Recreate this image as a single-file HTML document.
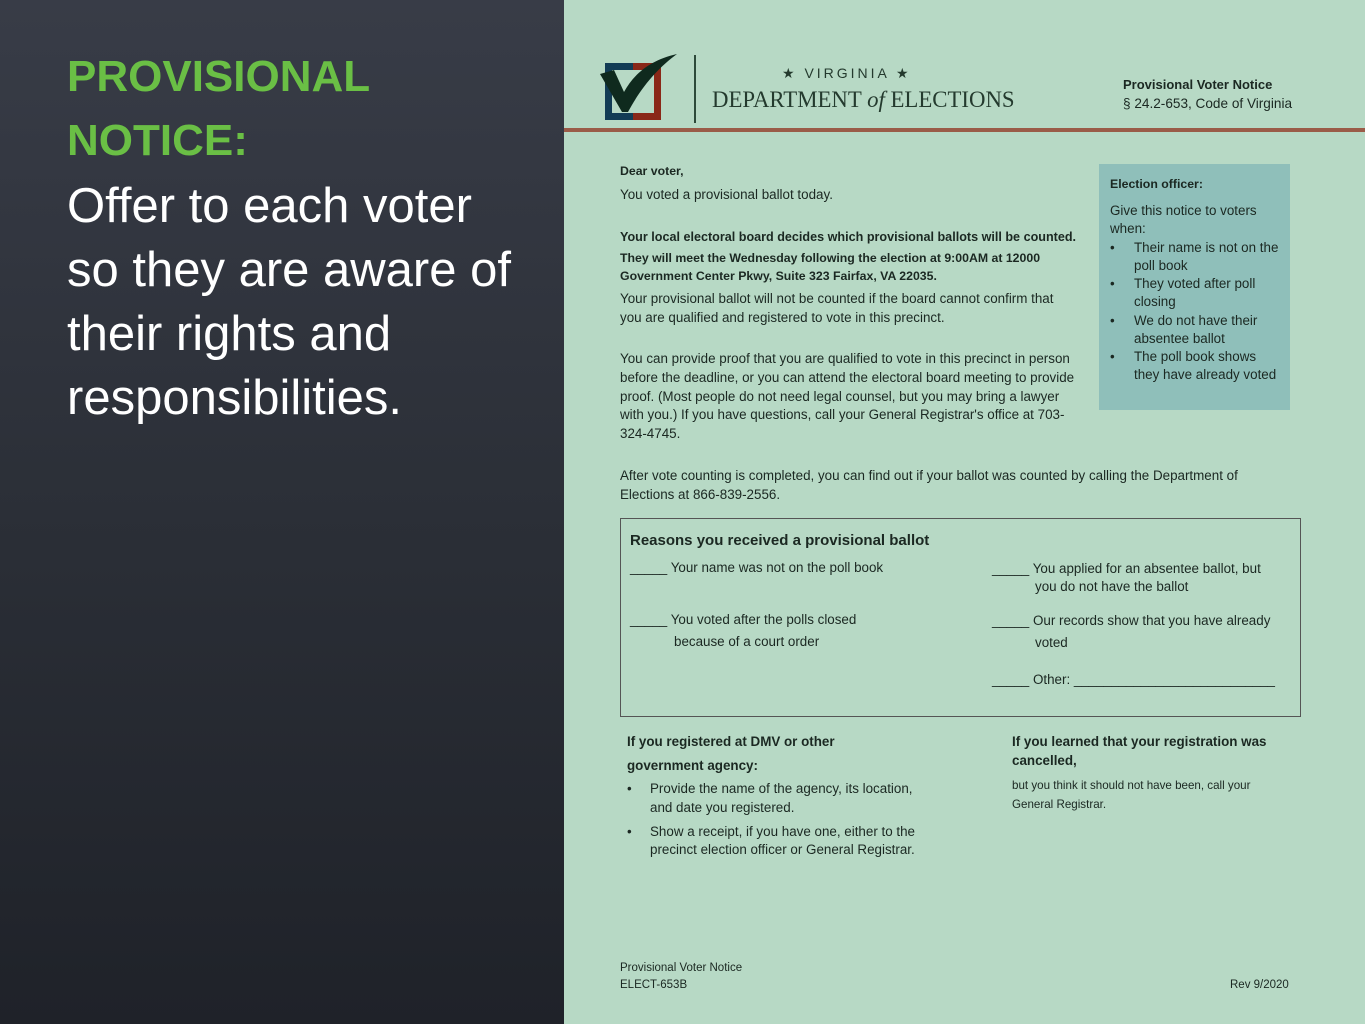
<!DOCTYPE html>
<html><head><meta charset="utf-8"><style>
*{margin:0;padding:0;box-sizing:border-box}
body{width:1365px;height:1024px;overflow:hidden;position:relative;font-family:"Liberation Sans",sans-serif}
#left{position:absolute;left:0;top:0;width:564px;height:1024px;background:linear-gradient(180deg,#383c47 0%,#2b2f37 50%,#1f2229 100%)}
#right{position:absolute;left:564px;top:0;width:801px;height:1024px;background:#b7d9c5}
.t{position:absolute;white-space:nowrap;font-size:13.4px;color:#1b2822;line-height:15px}
.b{font-weight:bold;font-size:12.3px}
.h1{position:absolute;left:67px;font-size:44px;font-weight:bold;color:#6abf45}
.h2{position:absolute;left:67px;font-size:49px;color:#fff;line-height:56px}
</style></head><body>
<div id="left">
<div class="h1" style="top:52px">PROVISIONAL</div>
<div class="h1" style="top:116px">NOTICE:</div>
<div class="h2" style="top:178px">Offer to each voter</div>
<div class="h2" style="top:242px">so they are aware of</div>
<div class="h2" style="top:306px">their rights and</div>
<div class="h2" style="top:370px">responsibilities.</div>
</div>
<div id="right">
<svg style="position:absolute;left:36px;top:52px" width="80" height="72" viewBox="0 0 80 72">
<rect x="5" y="11" width="28" height="57" fill="#123c55"/>
<rect x="33" y="11" width="28" height="57" fill="#8a2818"/>
<rect x="12" y="18" width="42" height="43" fill="#b7d9c5"/>
<path d="M0 22 L14 18 L24 40 C34 22 50 8 77 2 C58 16 42 34 28 60 L22 60 Z" fill="#0f2a1e"/>
</svg>
<div style="position:absolute;left:130px;top:55px;width:2px;height:68px;background:#2d4a3a"></div>
<div class="t" style="left:218px;top:66px;font-size:14px;letter-spacing:3px;color:#243a2e">★ VIRGINIA ★</div>
<div class="t" style="left:148px;top:87px;font-size:22.8px;line-height:26px;font-family:'Liberation Serif',serif;color:#243a2e">DEPARTMENT <i>of</i> ELECTIONS</div>
<div class="t b" style="left:559px;top:77px;font-size:13px">Provisional Voter Notice</div>
<div class="t" style="left:559px;top:96px;font-size:13.6px">§ 24.2-653, Code of Virginia</div>
<div style="position:absolute;left:0;top:128px;width:801px;height:4px;background:#9a5c48"></div>

<div class="t b" style="left:56px;top:164px">Dear voter,</div>
<div class="t" style="left:56px;top:187px">You voted a provisional ballot today.</div>
<div class="t b" style="left:56px;top:230px;font-size:12.6px">Your local electoral board decides which provisional ballots will be counted.</div>
<div class="t b" style="left:56px;top:251px">They will meet the Wednesday following the election at 9:00AM at 12000</div>
<div class="t b" style="left:56px;top:269px">Government Center Pkwy, Suite 323 Fairfax, VA 22035.</div>
<div class="t" style="left:56px;top:291px">Your provisional ballot will not be counted if the board cannot confirm that</div>
<div class="t" style="left:56px;top:310px">you are qualified and registered to vote in this precinct.</div>
<div class="t" style="left:56px;top:351px">You can provide proof that you are qualified to vote in this precinct in person</div>
<div class="t" style="left:56px;top:370px">before the deadline, or you can attend the electoral board meeting to provide</div>
<div class="t" style="left:56px;top:389px">proof. (Most people do not need legal counsel, but you may bring a lawyer</div>
<div class="t" style="left:56px;top:407px">with you.) If you have questions, call your General Registrar's office at 703-</div>
<div class="t" style="left:56px;top:426px">324-4745.</div>

<div style="position:absolute;left:535px;top:164px;width:191px;height:246px;background:#8fbfba"></div>
<div class="t b" style="left:546px;top:177px">Election officer:</div>
<div class="t" style="left:546px;top:203px">Give this notice to voters</div>
<div class="t" style="left:546px;top:221px">when:</div>
<div class="t" style="left:546px;top:240px">•</div><div class="t" style="left:570px;top:240px">Their name is not on the</div>
<div class="t" style="left:570px;top:258px">poll book</div>
<div class="t" style="left:546px;top:276px">•</div><div class="t" style="left:570px;top:276px">They voted after poll</div>
<div class="t" style="left:570px;top:294px">closing</div>
<div class="t" style="left:546px;top:313px">•</div><div class="t" style="left:570px;top:313px">We do not have their</div>
<div class="t" style="left:570px;top:331px">absentee ballot</div>
<div class="t" style="left:546px;top:349px">•</div><div class="t" style="left:570px;top:349px">The poll book shows</div>
<div class="t" style="left:570px;top:367px">they have already voted</div>

<div class="t" style="left:56px;top:468px">After vote counting is completed, you can find out if your ballot was counted by calling the Department of</div>
<div class="t" style="left:56px;top:487px">Elections at 866-839-2556.</div>

<div style="position:absolute;left:56px;top:518px;width:681px;height:199px;border:1px solid #555"></div>
<div class="t b" style="left:66px;top:532px;font-size:15px;line-height:17px">Reasons you received a provisional ballot</div>
<div class="t" style="left:66px;top:560px">_____ Your name was not on the poll book</div>
<div class="t" style="left:66px;top:612px">_____ You voted after the polls closed</div>
<div class="t" style="left:110px;top:634px">because of a court order</div>
<div class="t" style="left:428px;top:561px">_____ You applied for an absentee ballot, but</div>
<div class="t" style="left:471px;top:579px">you do not have the ballot</div>
<div class="t" style="left:428px;top:613px">_____ Our records show that you have already</div>
<div class="t" style="left:471px;top:635px">voted</div>
<div class="t" style="left:428px;top:672px">_____ Other: ___________________________</div>

<div class="t b" style="left:63px;top:734px;font-size:13.4px">If you registered at DMV or other</div>
<div class="t b" style="left:63px;top:758px;font-size:13.4px">government agency:</div>
<div class="t" style="left:63px;top:781px">•</div><div class="t" style="left:86px;top:781px">Provide the name of the agency, its location,</div>
<div class="t" style="left:86px;top:800px">and date you registered.</div>
<div class="t" style="left:63px;top:824px">•</div><div class="t" style="left:86px;top:824px">Show a receipt, if you have one, either to the</div>
<div class="t" style="left:86px;top:842px">precinct election officer or General Registrar.</div>

<div class="t b" style="left:448px;top:734px;font-size:13.4px">If you learned that your registration was</div>
<div class="t b" style="left:448px;top:753px;font-size:13.4px">cancelled,</div>
<div class="t" style="left:448px;top:778px;font-size:11.6px">but you think it should not have been, call your</div>
<div class="t" style="left:448px;top:797px;font-size:11.6px">General Registrar.</div>

<div class="t" style="left:56px;top:961px;font-size:11.5px">Provisional Voter Notice</div>
<div class="t" style="left:56px;top:978px;font-size:11.5px">ELECT-653B</div>
<div class="t" style="left:666px;top:978px;font-size:11.5px">Rev 9/2020</div>
</div>
</body></html>
